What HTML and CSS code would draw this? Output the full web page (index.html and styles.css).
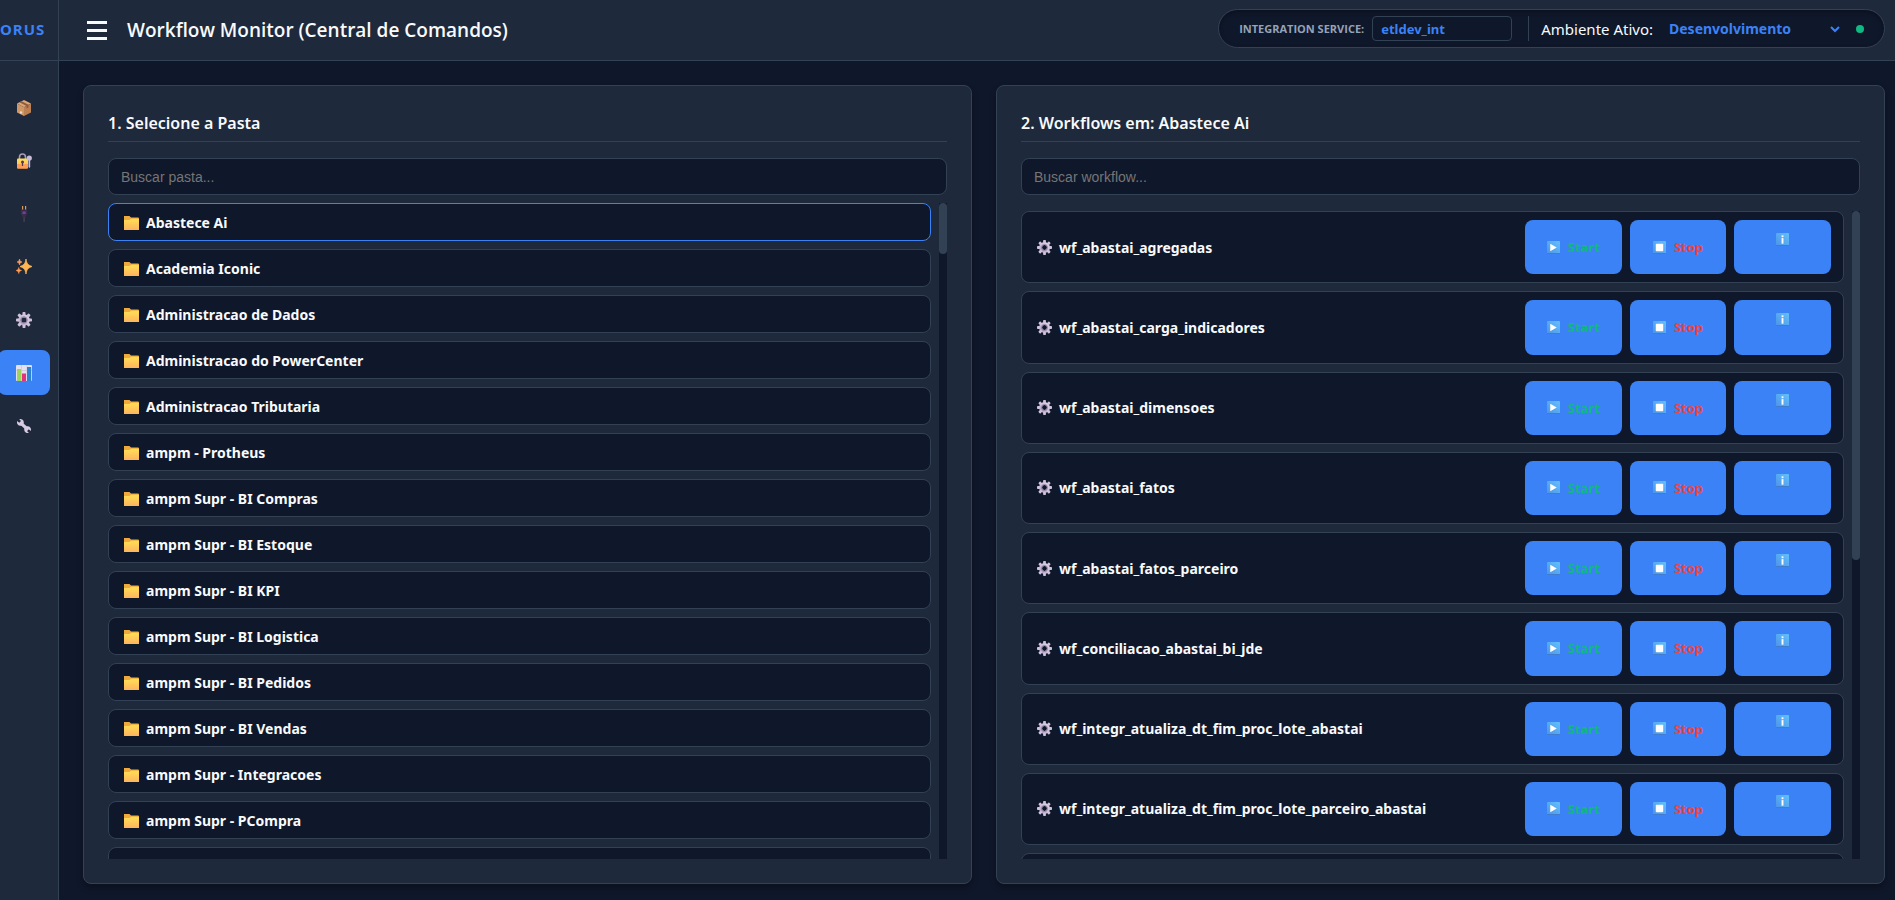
FILE: index.html
```html
<!DOCTYPE html>
<html lang="pt-BR">
<head>
  <meta charset="UTF-8">
  <meta name="viewport" content="width=device-width, initial-scale=1.0">
  <title>Workflow Monitor</title>
  <link rel="stylesheet" href="styles.css">
</head>
<body>

  <!-- Icon shapes shared by the lists and buttons -->
  <svg class="sprite" aria-hidden="true">
    <defs>
      <linearGradient id="gFolder" x1="0" y1="0" x2="0" y2="1">
        <stop offset="0" stop-color="#ffdf55"/><stop offset="1" stop-color="#ffb45f"/>
      </linearGradient>
      <linearGradient id="gGear" x1="1" y1="0" x2="0" y2="1">
        <stop offset="0" stop-color="#ece4f2"/><stop offset="1" stop-color="#a894bd"/>
      </linearGradient>
      <linearGradient id="gKey" x1="1" y1="0" x2="0" y2="1">
        <stop offset="0" stop-color="#62c0fb"/><stop offset="1" stop-color="#4c93e8"/>
      </linearGradient>
      <symbol id="folder" viewBox="0 -1 15 15">
        <path d="M0 0h5.500l1.500 1.500H14a1 1 0 0 1 1 1V6H0z" fill="#f0a93c"/>
        <path d="M0 4h5.500l1.500-1.300H15V13.500a.5.5 0 0 1-.5.5H.5a.5.5 0 0 1-.5-.5z" fill="url(#gFolder)"/>
      </symbol>
      <symbol id="gear" viewBox="0 0 16 16">
        <path fill="url(#gGear)" fill-rule="evenodd" d="M8 2.200a5.800 5.800 0 1 0 0 11.600A5.800 5.800 0 0 0 8 2.200zM8 5.400a2.600 2.600 0 1 1 0 5.200 2.600 2.600 0 0 1 0-5.200z"/>
        <g fill="#cfc2dc">
          <rect x="6.500" y="0" width="3" height="3.400" rx=".8"/>
          <rect x="6.500" y="12.600" width="3" height="3.400" rx=".8"/>
          <rect x="0" y="6.500" width="3.400" height="3" rx=".8"/>
          <rect x="12.600" y="6.500" width="3.400" height="3" rx=".8"/>
          <g transform="rotate(45 8 8)">
            <rect x="6.500" y="0" width="3" height="3.400" rx=".8"/>
            <rect x="6.500" y="12.600" width="3" height="3.400" rx=".8"/>
            <rect x="0" y="6.500" width="3.400" height="3" rx=".8"/>
            <rect x="12.600" y="6.500" width="3.400" height="3" rx=".8"/>
          </g>
        </g>
        <circle cx="8" cy="8" r="3.200" fill="none" stroke="#8b7a9c" stroke-width="1"/>
      </symbol>
      <symbol id="play" viewBox="0 0 14 14">
        <rect width="14" height="14" rx="1" fill="url(#gKey)"/>
        <path d="M0 13h14v.500a.5.5 0 0 1-.5.5H.5a.5.5 0 0 1-.5-.5z" fill="#3f7bd0"/>
        <path d="M3.500 3v8l7-4z" fill="#fff"/>
      </symbol>
      <symbol id="stop" viewBox="0 0 14 14">
        <rect width="14" height="14" rx="1" fill="url(#gKey)"/>
        <path d="M0 13h14v.500a.5.5 0 0 1-.5.5H.5a.5.5 0 0 1-.5-.5z" fill="#3f7bd0"/>
        <rect x="3" y="3" width="8" height="8" rx=".8" fill="#fff"/>
      </symbol>
      <symbol id="info" viewBox="0 0 14 14">
        <rect width="14" height="14" rx="1" fill="url(#gKey)"/>
        <path d="M0 13h14v.500a.5.5 0 0 1-.5.5H.5a.5.5 0 0 1-.5-.5z" fill="#3f7bd0"/>
        <rect x="6" y="2.500" width="2" height="2" fill="#fff"/>
        <rect x="6" y="5.500" width="2" height="6" fill="#fff"/>
      </symbol>
    </defs>
  </svg>

  <aside class="sidebar">
    <div class="logo">ORUS</div>
    <nav class="menu">
      <a href="#" aria-label="Pacotes">
        <svg viewBox="0 0 16 16"><path d="M8 0l7 3.500-7 3.700L1 3.500z" fill="#dba676"/><path d="M1 3.500l7 3.700V16l-7-3.500z" fill="#d09766"/><path d="M15 3.500L8 7.200V16l7-3.500z" fill="#bd8052"/><path d="M3.500 2.300l7 3.600v2.500l2-1V4.800L5.600 1.200z" fill="#8d5a3c"/><circle cx="5" cy="12.500" r="1.200" fill="#f3d9d0"/></svg>
      </a>
      <a href="#" aria-label="Acessos">
        <svg viewBox="0 0 16 16"><path d="M3.500 6V4a3 3 0 0 1 6 0v2" fill="none" stroke="#a99bbb" stroke-width="1.600"/><rect x="1" y="5.500" width="11" height="10" rx="1" fill="url(#gFolder)"/><path d="M1 11h11v3.500a1 1 0 0 1-1 1H2a1 1 0 0 1-1-1z" fill="#ff9d55"/><circle cx="6.500" cy="9" r="1.500" fill="#533a52"/><path d="M5.900 9h1.200v4H5.900z" fill="#533a52"/><circle cx="13.300" cy="5" r="2.600" fill="#c9bcd8"/><path d="M12.500 7h1.700v7l-.9 1-.8-1z" fill="#c9bcd8"/></svg>
      </a>
      <a href="#" aria-label="Conexões">
        <svg viewBox="0 0 16 16"><path d="M6 0h1.200v4H6zM9 0h1.200v4H9z" fill="#d99a5c"/><path d="M4.800 3.500h6.500V8L9.500 11h-3L4.800 8z" fill="#3a2b49"/><rect x="6.500" y="5.500" width="3.200" height="2.500" fill="#66479a"/><rect x="7.500" y="11" width="1.200" height="5" fill="#4c4456"/></svg>
      </a>
      <a href="#" aria-label="Novidades">
        <svg viewBox="0 0 16 16"><path d="M10 0c.8 4.500 1.500 5.800 6 7.500-4.500 1.700-5.200 3-6 7.500-.8-4.500-1.500-5.800-6-7.500C8.500 5.800 9.200 4.500 10 0z" fill="#ffb452" stroke="#ffb452" stroke-width=".8"/><path d="M3.500 0c.4 2 .8 2.500 2.500 3-1.700.5-2.100 1-2.500 3C3.100 4 2.700 3.500 1 3c1.700-.5 2.100-1 2.500-3zM2.800 8.500c.4 2 .9 2.500 2.700 3-1.800.5-2.300 1-2.700 3-.4-2-.9-2.500-2.700-3 1.800-.5 2.300-1 2.700-3z" fill="#ff9c55" stroke="#ff9c55" stroke-width=".6"/></svg>
      </a>
      <a href="#" aria-label="Configurações"><svg><use href="#gear"/></svg></a>
      <a href="#" class="active" aria-label="Monitor">
        <svg viewBox="0 0 16 16"><rect width="16" height="16" rx="1" fill="#e6dff0"/><path d="M0 5.500h16M5.500 0v16M11 0v16" stroke="#c8bdd6" stroke-width=".6"/><rect x="1" y="4" width="4" height="12" fill="#9ad65a"/><rect x="6" y="8.500" width="4" height="7.500" fill="#e0357c"/><rect x="11" y="2" width="4.200" height="14" fill="#2c83d3"/></svg>
      </a>
      <a href="#" aria-label="Ferramentas">
        <svg viewBox="0 0 16 16"><path d="M4.500 5l7.500 6.500" stroke="#d6cbe2" stroke-width="3"/><path d="M3.200 1.200L5 3 3.200 4.800 1.300 3A3.400 3.400 0 1 0 3.200 1.200zM12.800 14.800L11 13l1.800-1.800 1.900 1.800a3.400 3.400 0 1 0-1.900 1.800z" fill="#d6cbe2"/></svg>
      </a>
    </nav>
  </aside>

  <div class="page">
    <header class="topbar">
      <button type="button" class="menu-btn" aria-label="Menu"><span></span><span></span><span></span></button>
      <h1>Workflow Monitor (Central de Comandos)</h1>
      <div class="env">
        <label for="service" class="service-label">INTEGRATION SERVICE:</label>
        <input type="text" id="service" class="service-input" value="etldev_int">
        <span class="env-divider"></span>
        <label for="ambiente" class="env-label">Ambiente Ativo:</label>
        <select id="ambiente" class="env-select">
          <option>Desenvolvimento</option>
        </select>
        <span class="status-dot"></span>
      </div>
    </header>

    <main class="content">
      <section class="card">
        <h2>1. Selecione a Pasta</h2>
        <input type="text" class="search" placeholder="Buscar pasta..." aria-label="Buscar pasta">
        <div class="scroll-area">
          <div class="list" id="folders"></div>
          <div class="track"><div class="thumb thumb-folders"></div></div>
        </div>
      </section>

      <section class="card">
        <h2>2. Workflows em: Abastece Ai</h2>
        <input type="text" class="search" placeholder="Buscar workflow..." aria-label="Buscar workflow">
        <div class="scroll-area scroll-workflows">
          <div class="list" id="workflows"></div>
          <div class="track"><div class="thumb thumb-workflows"></div></div>
        </div>
      </section>
    </main>
  </div>

  <script src="script.js"></script>
</body>
</html>
```
FILE: styles.css
```css
/* General Styles */
* {
  box-sizing: border-box;
}

body {
  margin: 0;
  height: 100vh;
  display: flex;
  overflow: hidden;
  background-color: #0f172a;
  color: #f8fafc;
  font-family: 'Noto Sans', sans-serif;
}

.sprite {
  position: absolute;
  width: 0;
  height: 0;
}

/* Sidebar */
.sidebar {
  flex: none;
  width: 59px;
  background-color: #1e293b;
  border-right: 1px solid #334155;
}

.logo {
  height: 61px;
  line-height: 58px;
  border-bottom: 1px solid #334155;
  color: #3b82f6;
  font-size: 15px;
  font-weight: bold;
  letter-spacing: 1px;
}

.menu {
  display: flex;
  flex-direction: column;
  gap: 8px;
  padding-top: 24px;
}

.menu a {
  display: flex;
  align-items: center;
  justify-content: center;
  width: 52px;
  height: 45px;
  margin-left: -2px;
  border-radius: 8px;
}

.menu a.active {
  background-color: #3b82f6;
}

.menu svg {
  width: 16px;
  height: 16px;
}

/* Top bar */
.page {
  flex: 1;
  min-width: 0;
  display: flex;
  flex-direction: column;
}

.topbar {
  flex: none;
  display: flex;
  align-items: center;
  height: 61px;
  padding: 0 10px 0 28px;
  background-color: #1e293b;
  border-bottom: 1px solid #334155;
}

.menu-btn {
  display: flex;
  flex-direction: column;
  gap: 5px;
  width: 20px;
  margin-right: 20px;
  padding: 0;
  border: none;
  background: none;
  cursor: pointer;
}

.menu-btn span {
  height: 3px;
  background-color: #f8fafc;
}

h1 {
  margin: 0;
  font-family: 'Open Sans', sans-serif;
  font-size: 19px;
  font-weight: 600;
}

.env {
  display: flex;
  align-items: center;
  height: 39px;
  margin: 0 0 3px auto;
  padding: 0 20px;
  border: 1px solid #334155;
  border-radius: 20px;
  background-color: #0f172a;
  box-shadow: inset 0 2px 4px rgba(0, 0, 0, 0.3);
}

.service-label {
  color: #94a3b8;
  font-family: 'Open Sans', sans-serif;
  font-size: 11px;
  font-weight: bold;
}

.service-input {
  width: 140px;
  height: 25px;
  margin: 0 16px 0 8px;
  padding: 0 8px;
  border: 1px solid #334155;
  border-radius: 4px;
  background-color: #0f172a;
  color: #3b82f6;
  font: bold 13px 'Noto Sans', sans-serif;
}

.env-divider {
  width: 1px;
  height: 25px;
  margin-right: 12px;
  background-color: #334155;
}

.env-label {
  font-size: 15px;
}

.env-select {
  appearance: none;
  width: 188px;
  margin: 0 7px 0 8px;
  padding: 0 8px;
  border: none;
  background: url("data:image/svg+xml,%3Csvg xmlns='http://www.w3.org/2000/svg' viewBox='0 0 10 10'%3E%3Cpath d='M1 3l4 4 4-4' fill='none' stroke='%233b82f6' stroke-width='2'/%3E%3C/svg%3E") no-repeat right 9px center / 10px;
  color: #3b82f6;
  font: bold 14px 'Noto Sans', sans-serif;
}

.status-dot {
  width: 8px;
  height: 8px;
  border-radius: 50%;
  background-color: #10b981;
}

/* Cards */
.content {
  flex: 1;
  min-height: 0;
  display: grid;
  grid-template-columns: 1fr 1fr;
  gap: 24px;
  padding: 24px 10px 16px 24px;
}

.card {
  display: flex;
  flex-direction: column;
  min-height: 0;
  padding: 24px;
  border: 1px solid #334155;
  border-radius: 8px;
  background-color: #1e293b;
  box-shadow: 0 4px 6px rgba(0, 0, 0, 0.3);
}

h2 {
  flex: none;
  height: 32px;
  margin: 0 0 16px;
  line-height: 26px;
  border-bottom: 1px solid #334155;
  font-size: 16px;
  font-weight: 600;
}

.search {
  flex: none;
  height: 37px;
  padding: 0 12px;
  border: 1px solid #334155;
  border-radius: 8px;
  background-color: #0f172a;
  color: #f8fafc;
  font: 14px 'Liberation Sans', Arial, sans-serif;
}

.search::placeholder {
  color: #757575;
}

.scroll-area {
  flex: 1;
  min-height: 0;
  display: flex;
  gap: 8px;
  margin-top: 8px;
}

.scroll-workflows {
  margin-top: 16px;
}

.list {
  flex: 1;
  display: flex;
  flex-direction: column;
  gap: 8px;
  overflow: hidden;
}

.track {
  width: 8px;
  background-color: #0f172a;
}

.thumb {
  border-radius: 4px;
  background-color: #334155;
}

.thumb-folders {
  height: 51px;
}

.thumb-workflows {
  height: 349px;
}

/* List rows */
.folder {
  flex: none;
  display: flex;
  align-items: center;
  gap: 7px;
  height: 38px;
  padding: 0 15px;
  border: 1px solid #334155;
  border-radius: 8px;
  background-color: #0f172a;
  color: #f8fafc;
  font: bold 14px 'Noto Sans', sans-serif;
  text-align: left;
  cursor: pointer;
}

.folder.selected {
  border-color: #3b82f6;
}

.icon {
  flex: none;
  width: 15px;
  height: 15px;
}

.workflow {
  flex: none;
  display: flex;
  align-items: center;
  gap: 7px;
  min-height: 72px;
  padding: 8px 12px 8px 15px;
  border: 1px solid #334155;
  border-radius: 8px;
  background-color: #0f172a;
  font-size: 14px;
  font-weight: bold;
}

.actions {
  display: grid;
  grid-template-columns: repeat(3, 1fr);
  gap: 8px;
  width: 306px;
  margin-left: auto;
}

.actions button {
  display: flex;
  align-items: center;
  justify-content: center;
  gap: 8px;
  padding: 19px 0;
  border: none;
  border-radius: 8px;
  background-color: #3b82f6;
  font: bold 13px/1.25 'Open Sans', sans-serif;
  cursor: pointer;
}

.actions svg {
  width: 13px;
  height: 13px;
}

.actions .start {
  color: #10b981;
}

.actions .stop {
  color: #ef4444;
}

.actions .info {
  align-items: flex-start;
  padding-top: 13px;
}
```
FILE: script.js
```javascript
const folders = [
  'Abastece Ai', 'Academia Iconic', 'Administracao de Dados', 'Administracao do PowerCenter',
  'Administracao Tributaria', 'ampm - Protheus', 'ampm Supr - BI Compras', 'ampm Supr - BI Estoque',
  'ampm Supr - BI KPI', 'ampm Supr - BI Logistica', 'ampm Supr - BI Pedidos', 'ampm Supr - BI Vendas',
  'ampm Supr - Integracoes', 'ampm Supr - PCompra'
];

const workflows = [
  'wf_abastai_agregadas', 'wf_abastai_carga_indicadores', 'wf_abastai_dimensoes', 'wf_abastai_fatos',
  'wf_abastai_fatos_parceiro', 'wf_conciliacao_abastai_bi_jde',
  'wf_integr_atualiza_dt_fim_proc_lote_abastai', 'wf_integr_atualiza_dt_fim_proc_lote_parceiro_abastai'
];

// Folder list, first one selected
document.getElementById('folders').innerHTML = folders.map((name, i) => `
  <button type="button" class="folder ${i === 0 ? 'selected' : ''}">
    <svg class="icon"><use href="#folder"/></svg>${name}
  </button>`).join('') + '<div class="folder"></div>';

// Workflow list with its actions
document.getElementById('workflows').innerHTML = workflows.map((name) => `
  <div class="workflow">
    <svg class="icon"><use href="#gear"/></svg><span>${name}</span>
    <div class="actions">
      <button type="button" class="start"><svg><use href="#play"/></svg>Start</button>
      <button type="button" class="stop"><svg><use href="#stop"/></svg>Stop</button>
      <button type="button" class="info" aria-label="Info"><svg><use href="#info"/></svg></button>
    </div>
  </div>`).join('') + '<div class="workflow"></div>';
```
